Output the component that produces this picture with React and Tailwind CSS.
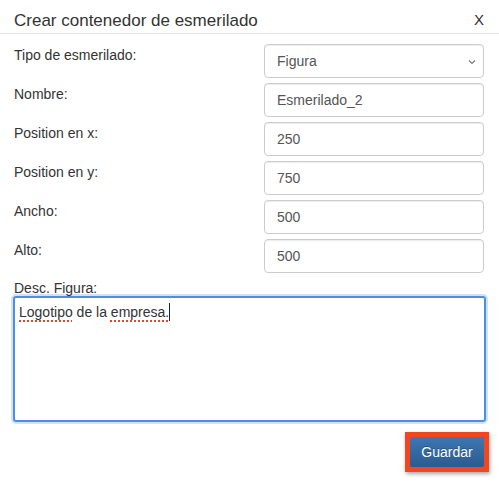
import React from "react";

const rows = [
  ["Nombre:", "Esmerilado_2"],
  ["Position en x:", "250"],
  ["Position en y:", "750"],
  ["Ancho:", "500"],
  ["Alto:", "500"],
];

export default function App() {
  return (
    <div className="w-[499px] h-[495px] bg-white text-[#333] font-['Liberation_Sans',Arial,sans-serif]">
      <div className="h-[34px] border-b border-[#e5e5e5] flex items-start justify-between pl-[14px] pr-[15px] pt-[10px]">
        <div className="text-[17px] leading-[20px] pt-[1px]">Crear contenedor de esmerilado</div>
        <div className="text-[15px] leading-[20px]">X</div>
      </div>
      <div className="pt-[10px] flex flex-col gap-[5px]">
        <div className="flex h-[34px] pl-[14px]">
          <div className="w-[250px] text-[14px] leading-[20px] pt-[1px]">Tipo de esmerilado:</div>
          <div className="w-[220px] h-[34px] border border-[#ccc] rounded-[4px] flex items-center justify-between pl-[12px] pr-[7px] text-[14px] text-[#555] shadow-[inset_0_1px_1px_rgba(0,0,0,0.075)]">
            <span className="pt-[1px]">Figura</span>
            <svg width="8" height="6" viewBox="0 0 8 6" className="mt-[1px]">
              <path d="M1 1.5 L4 4.5 L7 1.5" fill="none" stroke="#777" strokeWidth="1.2" />
            </svg>
          </div>
        </div>
        {rows.map(([l, v]) => (
          <div key={l} className="flex h-[34px] pl-[14px]">
            <div className="w-[250px] text-[14px] leading-[20px] pt-[1px]">{l}</div>
            <div className="w-[220px] h-[34px] border border-[#ccc] rounded-[4px] flex items-center pl-[12px] text-[14px] text-[#555] shadow-[inset_0_1px_1px_rgba(0,0,0,0.075)]">
              <span className="pt-[1px]">{v}</span>
            </div>
          </div>
        ))}
        <div className="pl-[14px] pt-[1px] text-[14px] leading-[18px]">Desc. Figura:</div>
      </div>
      <div className="px-[13px] -mt-[1px]">
        <div className="h-[126px] border-2 border-[#4a8ee6] rounded-[3px] shadow-[0_0_0_2px_#cfe2f8] px-[4px] pt-[4px] text-[14px] leading-[20px] text-[#333]">
          <span className="underline decoration-dotted decoration-[#e8402e] decoration-2 underline-offset-[3px]">Logotipo</span>
          {" de la "}
          <span className="underline decoration-dotted decoration-[#e8402e] decoration-2 underline-offset-[3px]">empresa.</span>
          <span className="inline-block w-[1px] h-[18px] bg-[#222] align-[-4px]"></span>
        </div>
      </div>
      <div className="flex justify-end pr-[10px] pt-[10px]">
        <div className="bg-[#f1461f] p-[5px] shadow-[1px_2px_4px_rgba(0,0,0,0.35)]">
          <div className="w-[74px] h-[30px] bg-gradient-to-b from-[#3d77b3] to-[#2b5b8f] rounded-[2px] flex items-center justify-center text-white text-[14px] [text-shadow:0_-1px_0_rgba(0,0,0,0.25)]">
            Guardar
          </div>
        </div>
      </div>
    </div>
  );
}
